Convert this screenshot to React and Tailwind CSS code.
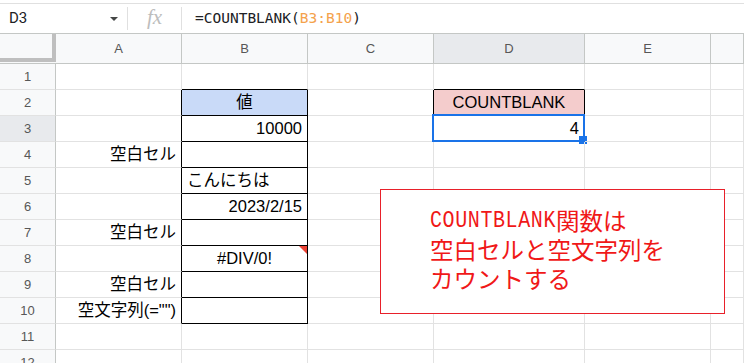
import React from 'react';

const COLS = [
  { id: 'A', w: 'w-[126px]' },
  { id: 'B', w: 'w-[126px]' },
  { id: 'C', w: 'w-[126px]' },
  { id: 'D', w: 'w-[151px]' },
  { id: 'E', w: 'w-[126px]' },
  { id: 'F', w: 'flex-1' },
];

// cell contents keyed by "<col><row>"
const CELLS = {
  B2: { text: '値', align: 'justify-center', bg: 'bg-[#c9daf8]' },
  B3: { text: '10000', align: 'justify-end' },
  A4: { text: '空白セル', align: 'justify-end' },
  B5: { text: 'こんにちは', align: 'justify-start' },
  B6: { text: '2023/2/15', align: 'justify-end' },
  A7: { text: '空白セル', align: 'justify-end' },
  B8: { text: '#DIV/0!', align: 'justify-center', error: true },
  A9: { text: '空白セル', align: 'justify-end' },
  A10: { text: '空文字列(="")', align: 'justify-end' },
  D2: { text: 'COUNTBLANK', align: 'justify-center', bg: 'bg-[#f4cccc]' },
  D3: { text: '4', align: 'justify-end', selected: true },
};

const BOXED = new Set(['B2', 'B3', 'B4', 'B5', 'B6', 'B7', 'B8', 'B9', 'B10', 'D2', 'D3']);

const ROWS = [1, 2, 3, 4, 5, 6, 7, 8, 9, 10, 11, 12];

const nextCol = (id) => String.fromCharCode(id.charCodeAt(0) + 1);

function Cell({ col, row }) {
  const key = `${col.id}${row}`;
  const cell = CELLS[key];
  const blackRight = BOXED.has(key) || BOXED.has(`${nextCol(col.id)}${row}`);
  const blackBottom = BOXED.has(key) || BOXED.has(`${col.id}${row + 1}`);

  return (
    <div
      className={`relative ${col.w} h-full shrink-0 flex items-center px-[5px] border-r border-b ${
        blackRight ? 'border-r-black' : 'border-r-[#e2e2e2]'
      } ${blackBottom ? 'border-b-black' : 'border-b-[#e2e2e2]'} ${cell?.bg || ''} ${cell?.align || ''}`}
    >
      {cell && <span className="whitespace-nowrap leading-none text-black">{cell.text}</span>}
      {cell?.error && (
        <svg className="absolute top-0 right-0" width="8" height="8" viewBox="0 0 8 8">
          <polygon points="0,0 8,0 8,8" fill="#ea4335" />
        </svg>
      )}
      {cell?.selected && (
        <>
          <div className="absolute -left-[2px] -top-[2px] -right-[1px] -bottom-[1px] border-2 border-[#1a73e8]" />
          <div className="absolute -right-[3px] -bottom-[3px] w-[8px] h-[8px] bg-[#1a73e8]" />
        </>
      )}
    </div>
  );
}

export default function App() {
  return (
    <div className="relative w-[744px] h-[363px] overflow-hidden bg-white font-['Liberation_Sans','Noto_Sans_CJK_JP',sans-serif]">
      <div className="h-[3px]" />

      {/* formula bar */}
      <div className="h-[30px] border-t border-[#e0e0e0] flex items-center">
        <div className="w-[127px] shrink-0 flex items-center pl-[9px] pr-[9px]">
          <span className="font-['Roboto',sans-serif] text-[15px] text-[#202124]">D3</span>
          <svg className="ml-auto" width="8" height="4" viewBox="0 0 8 4">
            <polygon points="0,0 8,0 4,4" fill="#444746" />
          </svg>
        </div>
        <div className="w-px h-[23px] bg-[#e0e0e0]" />
        <div className="w-[53px] shrink-0 flex justify-center">
          <span className="font-['Liberation_Serif',serif] italic text-[21px] leading-none text-[#bdbdbd] -mt-[2px]">fx</span>
        </div>
        <div className="w-px h-[23px] bg-[#e0e0e0]" />
        <div className="pl-[13px] font-['DejaVu_Sans_Mono',monospace] text-[14.5px] text-[#202124]">
          =COUNTBLANK(<span className="text-[#f4a24c]">B3:B10</span>)
        </div>
      </div>

      {/* column headers */}
      <div className="h-[31px] flex border-t border-b border-[#c4c7c5] bg-[#f8f9fa]">
        <div className="w-[56px] shrink-0 h-[28px] border-r-4 border-b-4 border-[#bfbfbf]" />
        {COLS.map((col) => (
          <div
            key={col.id}
            className={`${col.w} shrink-0 flex items-center justify-center border-r border-[#c4c7c5] text-[13px] text-[#575757] ${
              col.id === 'D' ? 'bg-[#e8eaed]' : ''
            }`}
          >
            {col.id !== 'F' && col.id}
          </div>
        ))}
      </div>

      {/* rows */}
      <div className="text-[16.5px]">
        {ROWS.map((row) => (
          <div key={row} className="flex h-[26px]">
            <div
              className={`w-[56px] shrink-0 flex items-center justify-center border-r border-r-[#c4c7c5] border-b border-b-[#e2e2e2] text-[13px] text-[#575757] ${
                row === 3 ? 'bg-[#e8eaed]' : 'bg-[#f8f9fa]'
              }`}
            >
              {row}
            </div>
            {COLS.map((col) => (
              <Cell key={col.id} col={col} row={row} />
            ))}
          </div>
        ))}
      </div>

      {/* drawn text box over the sheet */}
      <div className="absolute left-[380px] top-[189px] w-[345px] h-[125px] bg-white border border-[#e8202a] pl-[49px] pt-[16px] text-[#f01818] text-[23.5px] leading-[29px] font-['Noto_Sans_CJK_JP',sans-serif]">
        <div className="h-[29px] flex items-center whitespace-nowrap">
          <span className="inline-block leading-none scale-y-[1.2] font-['Liberation_Mono',monospace] text-[20px] tracking-[0.6px]">COUNTBLANK</span>
          <span className="leading-none">関数は</span>
        </div>
        <div className="h-[29px] flex items-center whitespace-nowrap">空白セルと空文字列を</div>
        <div className="h-[29px] flex items-center whitespace-nowrap">カウントする</div>
      </div>
    </div>
  );
}
